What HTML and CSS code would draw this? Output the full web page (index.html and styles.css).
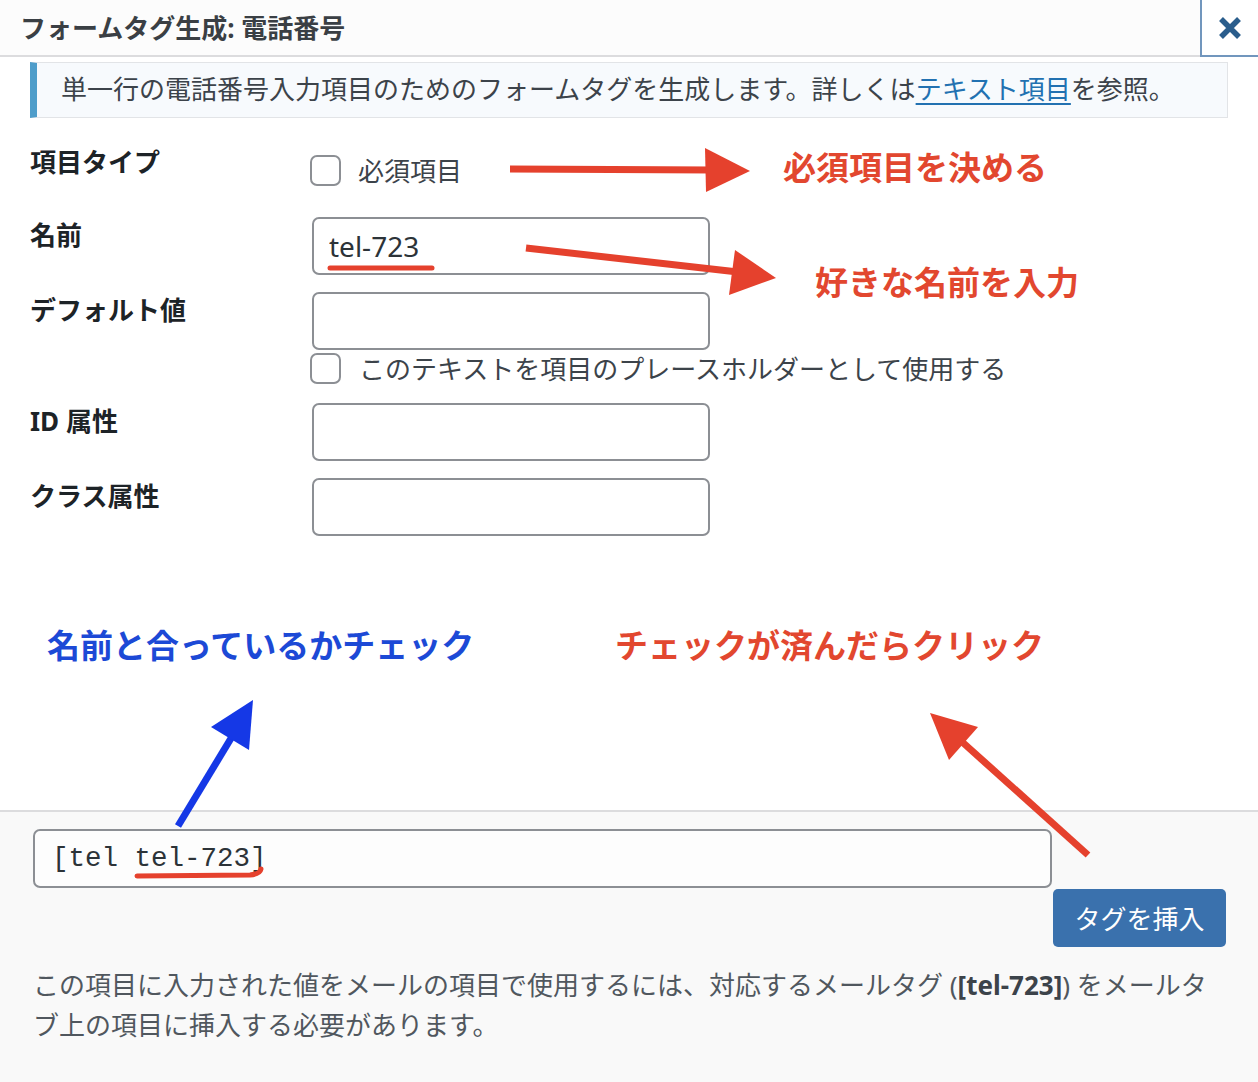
FILE: index.html
```html
<!DOCTYPE html>
<html lang="ja">
<head>
<meta charset="utf-8">
<title>フォームタグ生成: 電話番号</title>
<link rel="stylesheet" href="styles.css">
</head>
<body>
<div class="page">
  <header class="hd">
    <h1 class="title">フォームタグ生成: 電話番号</h1>
    <button class="close" type="button" aria-label="閉じる">
      <svg width="26" height="26" viewBox="0 0 26 26"><path d="M4 4 L22 22 M22 4 L4 22" stroke="#2a5d8c" stroke-width="5.5" stroke-linecap="butt" fill="none"/></svg>
    </button>
  </header>

  <main class="main">
    <div class="notice">単一行の電話番号入力項目のためのフォームタグを生成します。詳しくは<a href="#">テキスト項目</a>を参照。</div>

    <div class="form">
      <div class="lbl">項目タイプ</div>
      <div class="ctl ctl-type">
        <label class="chk"><input type="checkbox" class="box">必須項目</label>
      </div>

      <div class="lbl">名前</div>
      <div class="ctl"><input class="field" type="text" value="tel-723"></div>

      <div class="lbl">デフォルト値</div>
      <div class="ctl ctl-col">
        <input class="field" type="text" value="">
        <label class="chk chk-sub"><input type="checkbox" class="box">このテキストを項目のプレースホルダーとして使用する</label>
      </div>

      <div class="lbl">ID 属性</div>
      <div class="ctl"><input class="field" type="text" value=""></div>

      <div class="lbl">クラス属性</div>
      <div class="ctl"><input class="field" type="text" value=""></div>
    </div>
  </main>

  <footer class="ft">
    <input class="tag" type="text" value="[tel tel-723]" readonly>
    <div class="actions"><button class="insert" type="button">タグを挿入</button></div>
    <p class="note">この項目に入力された値をメールの項目で使用するには、対応するメールタグ (<strong>[tel-723]</strong>) をメールタブ上の項目に挿入する必要があります。</p>
  </footer>

  <div class="anno">
    <svg class="anno-svg" width="1258" height="1082" viewBox="0 0 1258 1082">
      <g fill="#e5412d" stroke="#e5412d">
        <line x1="510" y1="169" x2="712" y2="170" stroke-width="7"/>
        <polygon points="705,148 750,171 706,192" stroke="none"/>
        <line x1="526" y1="248" x2="738" y2="272" stroke-width="7"/>
        <polygon points="776,278 729,295 735,250" stroke="none"/>
        <line x1="1088" y1="855" x2="960" y2="740" stroke-width="7"/>
        <polygon points="930,713 978,727 949,760" stroke="none"/>
        <path d="M330 268 L432 268" stroke-width="5" stroke-linecap="round" fill="none"/>
        <path d="M137 876 L250 875 Q260 874 261 869" stroke-width="5" stroke-linecap="round" fill="none"/>
      </g>
      <g fill="#1538e6" stroke="#1538e6">
        <line x1="178" y1="826" x2="233" y2="735" stroke-width="7"/>
        <polygon points="253,700 249,750 211,727" stroke="none"/>
      </g>
    </svg>
    <span class="note-red n1">必須項目を決める</span>
    <span class="note-red n2">好きな名前を入力</span>
    <span class="note-blue n3">名前と合っているかチェック</span>
    <span class="note-red n4">チェックが済んだらクリック</span>
  </div>
</div>
</body>
</html>
```

FILE: styles.css
```css
* { box-sizing: border-box; }

html, body {
  margin: 0;
  padding: 0;
  background: #ffffff;
}

body {
  font-family: "Noto Sans", "Noto Sans CJK JP", sans-serif;
  color: #3c434a;
}

.page {
  position: relative;
  width: 1258px;
  height: 1082px;
  overflow: hidden;
  display: flex;
  flex-direction: column;
}

/* header */
.hd {
  flex: 0 0 57px;
  display: flex;
  align-items: center;
  background: #fcfcfc;
  border-bottom: 2px solid #dcdcde;
  padding-left: 20px;
}

.title {
  margin: 0;
  font-size: 26px;
  font-weight: 700;
  color: #3a3f44;
  line-height: 1;
}

.close {
  margin-left: auto;
  align-self: flex-start;
  width: 58px;
  height: 57px;
  margin-bottom: -2px;
  background: #ffffff;
  border: none;
  border-left: 2px solid #7196bd;
  border-bottom: 2px solid #7196bd;
  padding: 0;
  display: flex;
  align-items: center;
  justify-content: center;
}

/* main */
.main {
  flex: 1 1 auto;
  background: #ffffff;
}

.notice {
  margin: 5px 30px 0;
  height: 56px;
  display: flex;
  align-items: center;
  padding-left: 24px;
  background: #f7fafd;
  border: 1px solid #e2e4e7;
  border-left: 7px solid #4e9dca;
  font-size: 26px;
  line-height: 1.2;
  color: #3c434a;
}

.notice a {
  color: #2271b1;
  text-decoration: underline;
  text-underline-offset: 4px;
}

.form {
  display: grid;
  grid-template-columns: 280px 1fr;
  row-gap: 17px;
  padding: 26px 30px 0;
}

.lbl {
  font-size: 26px;
  font-weight: 700;
  line-height: 36px;
  color: #1d2327;
}

.ctl-type {
  padding-top: 8px;
  margin-bottom: 12px;
}

.ctl-col {
  display: flex;
  flex-direction: column;
  align-items: flex-start;
}

.chk {
  display: flex;
  align-items: center;
  gap: 17px;
  height: 36px;
  font-size: 26px;
  color: #3c434a;
}

.chk-sub {
  margin-top: 0;
  gap: 18px;
}

.box {
  -webkit-appearance: none;
  appearance: none;
  margin: 0;
  width: 31px;
  height: 31px;
  border: 2px solid #8c8f94;
  border-radius: 7px;
  background: #ffffff;
}

.field {
  display: block;
  width: 398px;
  height: 58px;
  margin-left: 2px;
  padding: 0 15px;
  border: 2px solid #8c8f94;
  border-radius: 7px;
  background: #ffffff;
  font-family: "Noto Sans", "Noto Sans CJK JP", sans-serif;
  font-size: 28px;
  color: #2c3338;
  outline: none;
}

/* footer */
.ft {
  flex: 0 0 272px;
  background: #f9f9f9;
  border-top: 2px solid #dcdcde;
  padding: 17px 32px 0 33px;
}

.tag {
  display: block;
  width: 1019px;
  height: 59px;
  padding: 0 17px;
  border: 2px solid #8c8f94;
  border-radius: 7px;
  background: #fdfdfd;
  font-family: "Liberation Mono", "DejaVu Sans Mono", monospace;
  font-size: 27.5px;
  color: #2c3338;
  outline: none;
}

.actions {
  display: flex;
  justify-content: flex-end;
}

.insert {
  width: 173px;
  height: 58px;
  margin-top: 1px;
  border: none;
  border-radius: 5px;
  background: #3a71ad;
  color: #ffffff;
  font-family: "Noto Sans", "Noto Sans CJK JP", sans-serif;
  font-size: 26px;
  padding: 0;
}

.note {
  margin: 18px 0 0;
  font-size: 26px;
  line-height: 40px;
  color: #50575e;
}

.note strong {
  color: #3c434a;
}

/* annotations overlay */
.anno {
  position: absolute;
  inset: 0;
  pointer-events: none;
}

.anno-svg {
  position: absolute;
  left: 0;
  top: 0;
}

.note-red,
.note-blue {
  position: absolute;
  font-family: "Noto Sans CJK JP", sans-serif;
  font-size: 33px;
  font-weight: 700;
  line-height: 1;
  white-space: nowrap;
}

.note-red { color: #e2472f; }
.note-blue { color: #1c49d6; }

.n1 { left: 783px; top: 150px; }
.n2 { left: 815px; top: 265px; }
.n3 { left: 47px; top: 628px; }
.n4 { left: 615px; top: 628px; }
```
